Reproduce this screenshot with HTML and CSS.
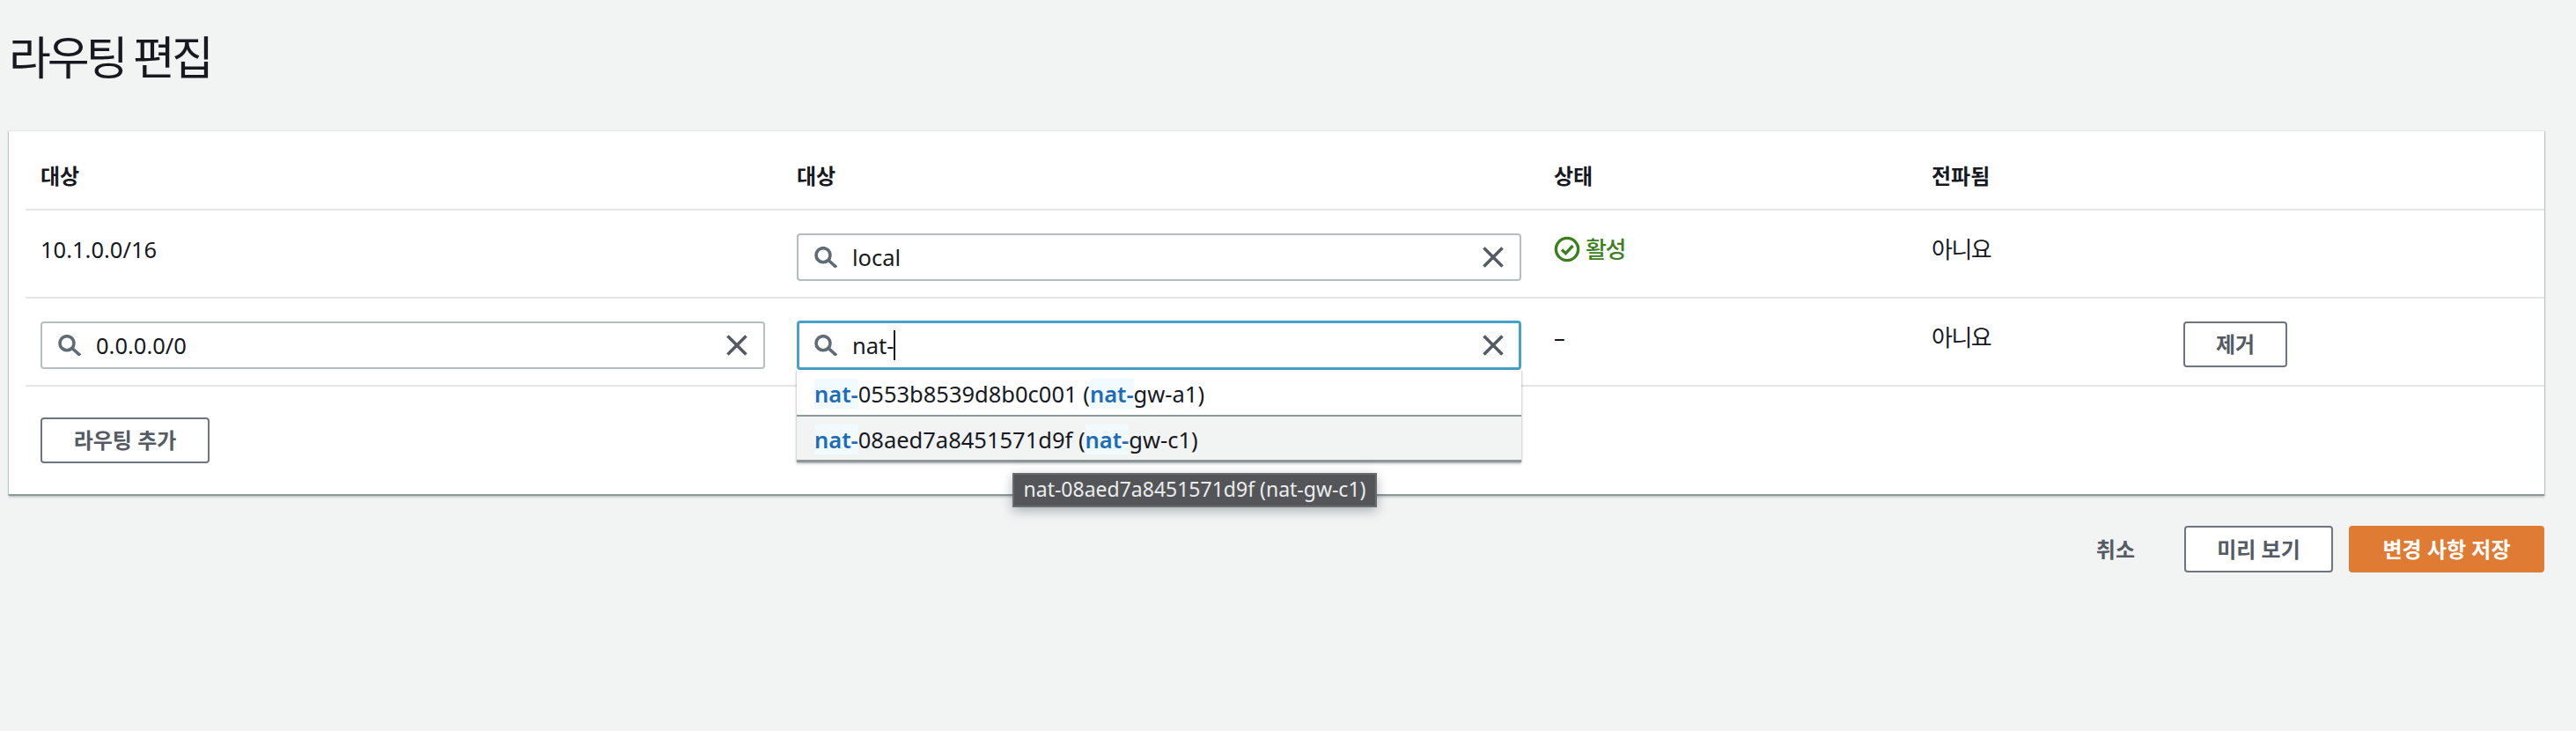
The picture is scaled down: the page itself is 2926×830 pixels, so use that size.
FILE: index.html
```html
<!DOCTYPE html>
<html lang="ko">
<head>
<meta charset="utf-8">
<title>라우팅 편집</title>
<link rel="stylesheet" href="styles.css">
</head>
<body>
<svg class="defs" width="0" height="0" aria-hidden="true">
  <symbol id="i-search" viewBox="0 0 26 24"><circle cx="10" cy="9.7" r="8" fill="none" stroke="currentColor" stroke-width="3.6"/><path d="M15.5 15L25 23.5" fill="none" stroke="currentColor" stroke-width="3.6"/></symbol>
  <symbol id="i-x" viewBox="0 0 24 24"><path d="M1.5 1.5L22.5 22.5M22.5 1.5L1.5 22.5" fill="none" stroke="currentColor" stroke-width="3.6"/></symbol>
</svg>
<main class="page">
  <h1 class="title">라우팅 편집</h1>
  <section class="card">
    <div class="row head">
      <div>대상</div><div>대상</div><div>상태</div><div>전파됨</div><div></div>
    </div>
    <div class="row">
      <div class="cell-text">10.1.0.0/16</div>
      <div class="field">
        <svg class="ico-search"><use href="#i-search"/></svg>
        <span class="val">local</span>
        <svg class="ico-x"><use href="#i-x"/></svg>
      </div>
      <div class="cell-text status">
        <svg class="ico-ok" viewBox="0 0 30 30"><circle cx="15" cy="15" r="12.6" fill="none" stroke="currentColor" stroke-width="3.4"/><path d="M9 15.5l4.4 4.2L21.5 11" fill="none" stroke="currentColor" stroke-width="3.4"/></svg>
        <span class="ko">활성</span>
      </div>
      <div class="cell-text ko">아니요</div>
      <div></div>
    </div>
    <div class="row">
      <div class="field">
        <svg class="ico-search"><use href="#i-search"/></svg>
        <span class="val">0.0.0.0/0</span>
        <svg class="ico-x"><use href="#i-x"/></svg>
      </div>
      <div class="combo">
        <div class="field focus">
          <svg class="ico-search"><use href="#i-search"/></svg>
          <span class="val">nat-<i class="caret"></i></span>
          <svg class="ico-x"><use href="#i-x"/></svg>
        </div>
        <ul class="menu">
          <li class="opt"><mark>nat-</mark>0553b8539d8b0c001 (<mark>nat-</mark>gw-a1)</li>
          <li class="opt active"><mark>nat-</mark>08aed7a8451571d9f (<mark>nat-</mark>gw-c1)</li>
        </ul>
        <div class="tip">nat-08aed7a8451571d9f (nat-gw-c1)</div>
      </div>
      <div class="cell-text">–</div>
      <div class="cell-text ko">아니요</div>
      <div><button class="btn remove">제거</button></div>
    </div>
    <div class="foot">
      <button class="btn add">라우팅 추가</button>
    </div>
  </section>
  <div class="actions">
    <button class="link">취소</button>
    <button class="btn preview">미리 보기</button>
    <button class="btn primary">변경 사항 저장</button>
  </div>
</main>
</body>
</html>
```
FILE: styles.css
```css
* { box-sizing: border-box; }
html, body { margin: 0; padding: 0; }
body {
  width: 2926px;
  height: 830px;
  background: #f2f3f3;
  color: #16191f;
  font-family: "Noto Sans", "Noto Sans CJK KR", sans-serif;
  font-size: 25.5px;
  line-height: 40px;
  overflow: hidden;
}
.defs { position: absolute; }
.page { padding: 0 36px 0 10px; }
.title {
  margin: 0;
  height: 149px;
  padding: 30px 0 0 0;
  font-size: 52px;
  letter-spacing: -4px;
  line-height: 70px;
  font-weight: 400;
}
.card {
  background: #fff;
  height: 414px;
  border-bottom: 2px solid #8d9899;
  box-shadow: 1px 0 1px rgba(0, 28, 36, .18), -1px 0 1px rgba(0, 28, 36, .18), 0 2px 2px rgba(0, 28, 36, .15);
}
.ko { font-size: 26px; letter-spacing: -1.5px; }
.row {
  display: grid;
  grid-template-columns: 859px 860px 429px 286px 1fr;
  margin-left: 19px;
  padding-left: 17px;
  height: 100px;
  border-bottom: 2px solid #e4e6e6;
}
.head {
  height: 90px;
  font-weight: 700;
  font-size: 24px;
  padding-top: 33px;
  line-height: 36px;
}
.cell-text { padding-top: 24px; }
.status {
  display: flex;
  align-items: flex-start;
  gap: 6px;
  color: #3b7f1f;
}
.ico-ok { width: 30px; height: 30px; margin-top: 5px; flex: none; }
.status .ko { font-weight: 500; }
.field {
  display: flex;
  align-items: center;
  width: 823px;
  height: 54px;
  margin-top: 26px;
  padding: 0 18px;
  background: #fff;
  border: 2px solid #b4bfc0;
  border-radius: 4px;
}
.field.focus {
  margin-top: 25px;
  height: 56px;
  border: 3px solid #46a2cb;
  padding: 0 17px;
}
.ico-search { width: 26px; height: 24px; color: #5f6b75; flex: none; }
.ico-x { width: 24px; height: 24px; color: #545b64; flex: none; margin-left: auto; }
.val { margin-left: 17px; position: relative; }
.caret {
  position: absolute;
  top: 3px;
  width: 2px;
  height: 34px;
  background: #16191f;
}
.combo { position: relative; }
.menu {
  position: absolute;
  z-index: 2;
  top: 81px;
  left: 0;
  width: 823px;
  margin: 0;
  padding: 0;
  list-style: none;
  background: #fff;
  box-shadow: 0 1px 3px rgba(0, 28, 36, .4);
}
.opt {
  height: 51px;
  padding: 8px 20px 0;
  line-height: 38px;
  white-space: nowrap;
}
.opt.active {
  height: 54px;
  padding-top: 7px;
  background: #f2f3f3;
  border-top: 2px solid #8d9899;
  border-bottom: 3px solid #8d9899;
}
mark { background: #f1faff; color: #1e6bb8; font-weight: 600; }
.tip {
  position: absolute;
  z-index: 3;
  top: 198px;
  left: 245px;
  width: 414px;
  height: 39px;
  background: #545559;
  border: 2px solid #6a6b6f;
  color: #eaeded;
  font-size: 23px;
  line-height: 33px;
  text-align: center;
  white-space: nowrap;
  box-shadow: 0 4px 12px rgba(0, 28, 36, .3);
}
.foot { padding: 35px 0 0 36px; }
.btn {
  font: inherit;
  font-weight: 700;
  font-size: 24px;
  line-height: 32px;
  background: #fff;
  color: #545b64;
  border: 2px solid #6f757e;
  border-radius: 4px;
  padding: 0;
}
.remove { width: 118px; height: 52px; margin-top: 26px; }
.add { width: 192px; height: 52px; }
.actions {
  display: flex;
  justify-content: flex-end;
  align-items: center;
  margin-top: 34px;
}
.link {
  font: inherit;
  font-weight: 700;
  font-size: 24px;
  background: none;
  border: 0;
  color: #545b64;
  padding: 0;
  margin-right: 56px;
}
.preview { width: 169px; height: 53px; margin-right: 18px; }
.primary {
  width: 222px;
  height: 53px;
  background: #df7b33;
  border-color: #df7b33;
  color: #fff;
}
```
